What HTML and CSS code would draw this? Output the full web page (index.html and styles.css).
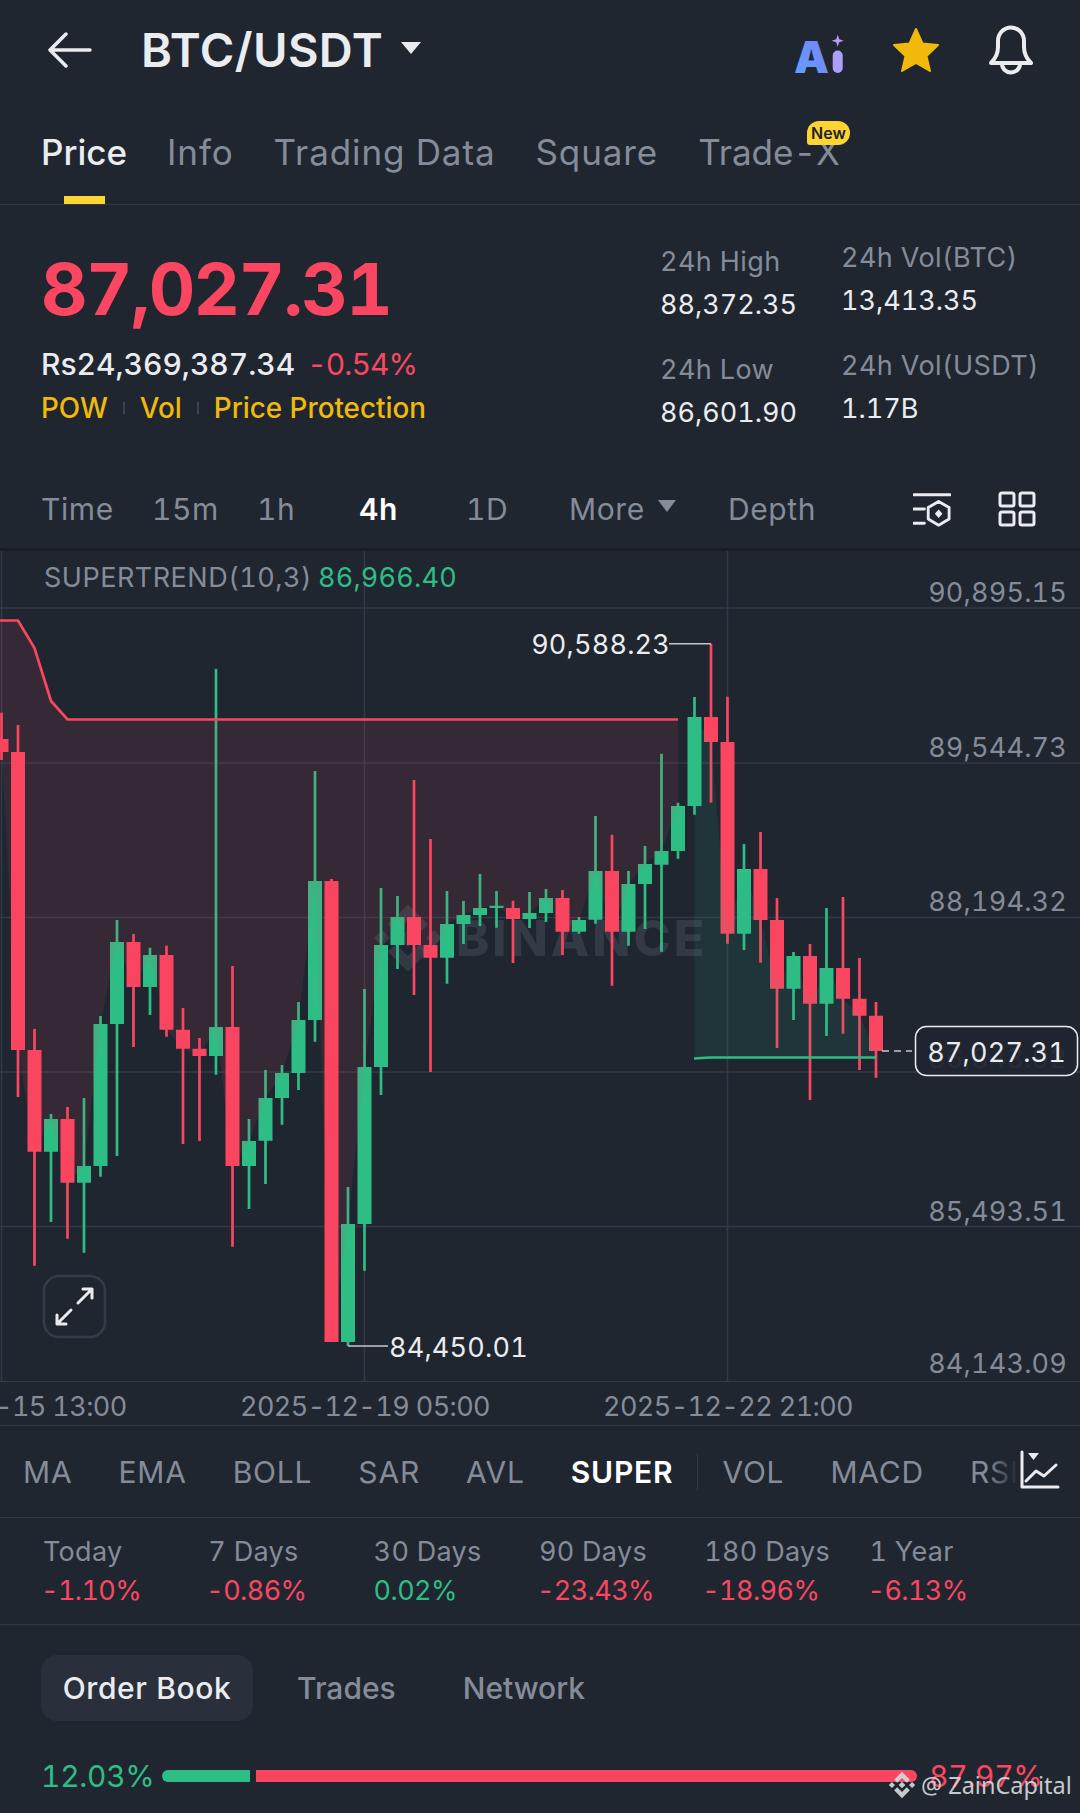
FILE: index.html
```
<!DOCTYPE html>
<html lang="en">
<head>
<meta charset="utf-8">
<title>BTC/USDT</title>
<link rel="stylesheet" href="styles.css">
</head>
<body>
<svg class="defs" width="0" height="0" aria-hidden="true">
  <defs>
    <symbol id="bnb" viewBox="0 0 100 100">
      <path d="M50 38 62 50 50 62 38 50ZM14 39 25 50 14 61 3 50ZM86 39 97 50 86 61 75 50ZM50 3 78 31 67 42 50 25 33 42 22 31ZM50 97 78 69 67 58 50 75 33 58 22 69Z"/>
    </symbol>
    <linearGradient id="aigrad" x1="0" y1="1" x2="1" y2="0">
      <stop offset="0" stop-color="#5fa2ff"/>
      <stop offset="1" stop-color="#7a80f5"/>
    </linearGradient>
  </defs>
</svg>
<main class="page">
  <header class="topbar">
    <svg class="back" viewBox="0 0 44 36"><path d="M42 18H3M18 2 2 18 18 34"/></svg>
    <h1 class="pair">BTC/USDT</h1>
    <svg class="caret" viewBox="0 0 24 16"><path d="M2 2H22L12 14Z"/></svg>
    <div class="actions">
      <svg class="ai" viewBox="0 0 50 34">
        <text x="-3" y="33" class="ai-text">A</text>
        <rect class="ai-i" x="35.700" y="10.600" width="10" height="22.400" rx="5"/>
        <path class="ai-spark" d="M40.700-5.300 42.200-.8 46.700.7 42.200 2.200 40.700 6.700 39.200 2.200 34.700.7 39.200-.8Z"/>
      </svg>
      <svg class="star" viewBox="0 0 48 46"><path d="M24 2 30.500 16.500 46 18 34.500 29 38 44 24 36 10 44 13.500 29 2 18 17.500 16.500Z"/></svg>
      <svg class="bell" viewBox="0 0 48 50"><path d="M4 38Q11 31 11 22V16A13 13.500 0 0 1 37 16V22Q37 31 44 38Z"/><path d="M15 39A9 8.500 0 0 0 33 39"/></svg>
    </div>
  </header>

  <nav class="tabs">
    <a class="tab tab-on">Price</a>
    <a class="tab">Info</a>
    <a class="tab">Trading Data</a>
    <a class="tab">Square</a>
    <a class="tab tab-new">Trade-X<span class="badge">New</span></a>
  </nav>

  <section class="stats">
    <div class="quote">
      <div class="last">87,027.31</div>
      <div class="fiat"><span>Rs24,369,387.34</span><span class="dn">-0.54%</span></div>
      <div class="tags"><span>POW</span><i></i><span>Vol</span><i></i><span>Price Protection</span></div>
    </div>
    <div class="col col-a">
      <dl><dt>24h High</dt><dd>88,372.35</dd></dl>
      <dl><dt>24h Low</dt><dd>86,601.90</dd></dl>
    </div>
    <div class="col col-b">
      <dl><dt>24h Vol(BTC)</dt><dd>13,413.35</dd></dl>
      <dl><dt>24h Vol(USDT)</dt><dd>1.17B</dd></dl>
    </div>
  </section>

  <div class="frames">
    <span>Time</span><span>15m</span><span>1h</span><span class="frame-on">4h</span><span>1D</span>
    <span class="more">More<svg viewBox="0 0 20 14"><path d="M1 1H19L10 13Z"/></svg></span>
    <span>Depth</span>
    <svg class="ficon" viewBox="0 0 40 36"><path d="M1 3H39M1 18H12M1 33H12"/><path d="M27 11 38 17.500V29.500L27 36 16 29.500V17.500Z" transform="translate(0 -1)"/><path class="solid" d="M27 18.500 31 23 27 27.500 23 23Z"/></svg>
    <svg class="ficon" viewBox="0 0 38 36"><rect x="2" y="2" width="14" height="13" rx="2"/><rect x="22" y="2" width="14" height="13" rx="2"/><rect x="2" y="21" width="14" height="13" rx="2"/><rect x="22" y="21" width="14" height="13" rx="2"/></svg>
  </div>

  <section class="chart">
    <svg class="plot" viewBox="0 551 1080 830">
      <path class="grid" d="M0 608H1080M0 763H1080M0 917.500H1080M0 1072H1080M0 1226.500H1080M1.500 551V1381M364.500 551V1381M727.500 551V1381"/>
      <g class="mark">
        <use href="#bnb" x="372" y="902" width="72" height="72"/>
        <text x="456" y="956" class="mark-text">BINANCE</text>
      </g>
      <path class="wick up" d="M51 1114V1222M84 1098V1252.700M100.500 1016V1176.700M117 920V1156M150 947.700V1015M216 669V1074.700M249 1119V1209M265.500 1070V1184M282 1065V1124.700M298.500 1002V1090M315 771V1041.700M348 1187V1346M364.500 989V1270.700M381 888V1095M397.500 896V969M447 891V983.700M463.500 901V944M480 874V926M496.500 891V927.700M529.500 892V928M546 889V922M579 917V933.700M595.500 816V923.700M628.500 871V945.700M645 846V929M661.500 753.700V951.700M678 802.700V858.700M694.500 697V814.700M744 844V950M793.500 952V1020M826.500 908V1036"/>
      <path class="wick dn" d="M1.500 712.700V760M18 725V1097M34.500 1029V1265.700M67.500 1107V1238.700M133.500 934V1047M166.500 945.700V1036.700M183 1008V1144M199.500 1038V1141M232.500 966V1246.700M331.500 879V1342M414 780V995M430.500 839V1072M513 900.700V963M562.500 890V955M612 834.700V985.700M711 643.700V802.700M727.500 696.700V943.700M760.500 832V962.700M777 898V1048M810 944V1100M843 897V1033.700M859.500 958V1070M876 1002V1077.700"/>
      <path class="body up" d="M51 1119V1151.700M84 1166V1182.700M100.500 1024V1166M117 942V1024M150 955V987M216 1027V1056M249 1141V1166M265.500 1098V1140.700M282 1073V1098M298.500 1020V1073M315 881V1020M348 1224V1342M364.500 1067V1224M381 945V1067M397.500 917V945M447 924V957.700M463.500 915V924M480 908V915M496.500 905.700V908M529.500 913V919M546 898V913M579 920V931.700M595.500 871V919.700M628.500 884V931.700M645 864V884M661.500 851V864.700M678 806V851M694.500 717V806M744 869V933.700M793.500 956V988.700M826.500 968V1003.700"/>
      <path class="body dn" d="M1.500 739V752M18 752V1050M34.500 1050V1151.700M67.500 1119V1182.700M133.500 942V987M166.500 955V1029.700M183 1029.700V1048.700M199.500 1048.700V1056M232.500 1027V1166M331.500 881V1342M414 917V945M430.500 945V957.700M513 908V919M562.500 898V931.700M612 871V931.700M711 717V742M727.500 742V933.700M760.500 869V920M777 920V988.700M810 956V1003.700M843 968V998.700M859.500 998.700V1015.700M876 1015.700V1051"/>
      <polygon class="fill-dn" points="0,620.500 18,620.500 34.500,648 51,701 67.500,719.500 678,719.700 678,806 661.500,851 645,864 628.500,884 612,931.700 595.500,871 579,920 562.500,931.700 546,898 529.500,913 513,919 496.500,905.700 480,908 463.500,915 447,924 430.500,957.700 414,945 397.500,917 381,945 364.500,1067 348,1224 331.500,1342 315,881 298.500,1020 282,1073 265.500,1098 249,1141 232.500,1166 216,1027 199.500,1056 183,1048.700 166.500,1029.700 150,955 133.500,987 117,942 100.500,1024 84,1166 67.500,1182.700 51,1119 34.500,1151.700 18,1050 1.500,752 0,752"/>
      <polygon class="fill-up" points="694.500,717 711,742 727.500,933.700 744,869 760.500,920 777,988.700 793.500,956 810,1003.700 826.500,968 843,998.700 859.500,1015.700 876,1051 876,1058 694.500,1058"/>
      <path class="trend dn" d="M0 620.500H18L34.500 648 51 701 67.500 719.500H678"/>
      <path class="trend up" d="M694 1058.500 710 1057.500H876"/>
      <path class="leader" d="M669 643.700H711M348 1346H388"/>
      <path class="dash" d="M882 1051H912"/>

      <text x="44" y="587" class="legend">SUPERTREND(10,3)</text>
      <text x="318" y="587" class="legend-up">86,966.40</text>
      <text x="1067" y="602" class="axis">90,895.15</text>
      <text x="1067" y="757" class="axis">89,544.73</text>
      <text x="1067" y="911" class="axis">88,194.32</text>
      <text x="1067" y="1068" class="axis">86,843.92</text>
      <text x="1067" y="1221" class="axis">85,493.51</text>
      <text x="1067" y="1373" class="axis">84,143.09</text>
      <text x="670" y="654" class="extreme end">90,588.23</text>
      <text x="389" y="1357" class="extreme">84,450.01</text>
      <rect class="tag" x="915.500" y="1026.500" width="162" height="49" rx="11"/>
      <text x="1066" y="1062" class="tag-text">87,027.31</text>
      <rect class="expand" x="44" y="1276" width="61" height="61" rx="15"/>
      <path class="expand-arrow" d="M78 1303 92 1289M83 1289H92V1298M71 1310 57 1324M57 1315V1324H66"/>
    </svg>
  </section>

  <div class="dates">
    <span class="d1">-15 13:00</span>
    <span class="d2">2025-12-19 05:00</span>
    <span class="d3">2025-12-22 21:00</span>
  </div>

  <div class="indicators">
    <span>MA</span><span>EMA</span><span>BOLL</span><span>SAR</span><span>AVL</span>
    <span class="ind-on">SUPER</span>
    <span>VOL</span><span>MACD</span><span>RSI</span>
    <div class="ind-end">
      <svg viewBox="0 0 40 40"><path d="M2 2V37H38"/><path d="M6 31 16 21 24 26 36 15"/><path class="solid" d="M8 3H19L13.500 10Z"/></svg>
    </div>
  </div>

  <div class="returns">
    <div><p>Today</p><b class="dn">-1.10%</b></div>
    <div><p>7 Days</p><b class="dn">-0.86%</b></div>
    <div><p>30 Days</p><b class="up">0.02%</b></div>
    <div><p>90 Days</p><b class="dn">-23.43%</b></div>
    <div><p>180 Days</p><b class="dn">-18.96%</b></div>
    <div><p>1 Year</p><b class="dn">-6.13%</b></div>
  </div>

  <div class="book">
    <span class="book-on">Order Book</span>
    <span class="book-trades">Trades</span>
    <span class="book-net">Network</span>
  </div>

  <div class="ratio">
    <span class="up ratio-label">12.03%</span>
    <div class="bar"><i class="bar-up"></i><i class="bar-dn"></i></div>
    <span class="dn">87.97%</span>
  </div>

  <div class="stamp"><svg viewBox="0 0 100 100"><use href="#bnb"/></svg><span>@ ZainCapital</span></div>
</main>
</body>
</html>
```

FILE: styles.css
```
:root {
  --bg: #1f2630;
  --line: #333a46;
  --text: #eaecef;
  --muted: #858c99;
  --red: #fa4660;
  --green: #2ebd85;
  --yellow: #f0b90b;
}
* { box-sizing: border-box; }
html, body { margin: 0; background: var(--bg); }
body { font-family: Inter, "Liberation Sans", sans-serif; font-variant-numeric: tabular-nums; color: var(--text); }
.defs { position: absolute; }
.page { position: relative; width: 1080px; height: 1813px; overflow: hidden; background: var(--bg); }
svg { display: block; }

.topbar { height: 100px; display: flex; align-items: center; padding: 0 45px 0 48px; }
.back { width: 44px; height: 36px; fill: none; stroke: var(--text); stroke-width: 3.5; stroke-linecap: round; stroke-linejoin: round; }
.pair { margin: 0 0 0 49px; font-size: 47px; font-weight: 600; letter-spacing: .4px; line-height: 100px; }
.caret { width: 24px; height: 16px; margin: 0 0 4px 16px; fill: var(--text); }
.actions { margin-left: auto; display: flex; align-items: center; gap: 47px; }
.ai { width: 50px; height: 34px; margin: 14px -2px 0 0; overflow: visible; }
.ai-text { font-size: 44px; font-weight: 900; fill: url(#aigrad); }
.ai-i { fill: #ac9ffb; }
.ai-spark { fill: #b59bfb; }
.star { width: 48px; height: 46px; fill: var(--yellow); stroke: var(--yellow); stroke-width: 2; stroke-linejoin: round; }
.bell { width: 48px; height: 50px; fill: none; stroke: var(--text); stroke-width: 4; stroke-linejoin: round; stroke-linecap: round; }

.tabs { height: 105px; display: flex; gap: 40px; padding: 0 41px; border-bottom: 1px solid var(--line); }
.tab { position: relative; height: 104px; font-size: 35px; letter-spacing: .9px; line-height: 104px; color: var(--muted); }
.tab-on { color: var(--text); font-weight: 500; letter-spacing: 0; }
.tab-new { letter-spacing: 0; }
.tab-on::after { content: ""; position: absolute; left: 23px; bottom: 0; width: 41px; height: 8px; background: #fcd535; }
.badge { position: absolute; right: -10px; top: 21px; width: 43px; height: 24px; background: #fcd535; color: #1e2329; border-radius: 12px 12px 12px 3px; font-size: 16px; font-weight: 600; letter-spacing: 0; line-height: 24px; text-align: center; }

.stats { height: 265px; display: flex; padding-left: 41px; }
.quote { width: 619px; padding-top: 47px; }
.last { font-size: 72px; font-weight: 700; letter-spacing: -1.600px; line-height: 74px; color: var(--red); }
.fiat { display: flex; gap: 12px; margin-top: 20px; font-size: 30px; line-height: 36px; font-weight: 500; color: var(--text); }
.fiat .dn { font-weight: 400; letter-spacing: -.9px; }
.tags { display: flex; align-items: center; margin-top: 9px; font-size: 27.800px; line-height: 34px; font-weight: 500; color: var(--yellow); }
.tags i { width: 2px; height: 12px; margin: 0 15px; background: #3a4350; }
.col { font-size: 27px; }
.col-a { width: 181px; padding-top: 39px; }
.col-b { padding-top: 35px; }
.col dl { margin: 0 0 29px; }
.col dt { line-height: 36px; letter-spacing: .4px; color: var(--muted); }
.col dd { margin: 7px 0 0; line-height: 36px; color: var(--text); }

.frames { height: 81px; display: grid; grid-template-columns: 111px 105px 102px 107px 103px 159px 185px 85px 38px; align-items: center; padding-left: 41px; border-bottom: 3px solid #181d25; font-size: 30px; letter-spacing: .6px; color: var(--muted); }
.frame-on { color: #fff; font-weight: 600; }
.more { display: flex; align-items: center; gap: 12px; }
.more svg { width: 20px; height: 14px; margin-bottom: 6px; fill: var(--muted); }
.ficon { width: 38px; height: 36px; fill: none; stroke: var(--text); stroke-width: 3; stroke-linecap: round; stroke-linejoin: round; }
.solid { fill: currentColor; stroke: none; }
.ficon .solid { fill: var(--text); }

.chart { height: 831px; border-bottom: 1px solid var(--line); }
.plot { width: 1080px; height: 830px; }
.plot text { font-family: Inter, "Liberation Sans", sans-serif; font-variant-numeric: tabular-nums; letter-spacing: .2px; }
.grid { fill: none; stroke: var(--line); stroke-width: 1.5; }
.mark { fill: #333a46; }
.plot .mark-text { font-size: 50px; font-weight: 800; letter-spacing: 3px; }
.wick { fill: none; stroke-width: 2.700; }
.body { fill: none; stroke-width: 14; }
.wick.up, .body.up { stroke: var(--green); }
.wick.dn, .body.dn { stroke: var(--red); }
.fill-dn { fill: rgba(246, 70, 93, .1); }
.fill-up { fill: rgba(46, 189, 133, .1); }
.trend { fill: none; stroke-width: 2.700; }
.trend.dn { stroke: var(--red); }
.trend.up { stroke: var(--green); }
.leader { fill: none; stroke: #c2c6cd; stroke-width: 1.500; }
.dash { fill: none; stroke: #c2c6cd; stroke-width: 1.500; stroke-dasharray: 7 5; }
.plot .legend { font-size: 27px; letter-spacing: .5px; fill: var(--muted); }
.legend-up { font-size: 27px; fill: var(--green); }
.axis { font-size: 27px; fill: var(--muted); text-anchor: end; }
.extreme { font-size: 27px; fill: var(--text); }
.extreme.end { text-anchor: end; }
.tag { fill: rgba(31, 38, 48, .93); stroke: var(--text); stroke-width: 1.500; }
.tag-text { font-size: 27px; fill: var(--text); text-anchor: end; }
.expand { fill: none; stroke: #353b47; stroke-width: 2.500; }
.expand-arrow { fill: none; stroke: var(--text); stroke-width: 3; stroke-linecap: round; stroke-linejoin: round; }

.dates { position: relative; height: 44px; border-bottom: 1px solid var(--line); font-size: 27px; letter-spacing: -.6px; line-height: 50px; color: var(--muted); }
.dates span { position: absolute; top: 0; }
.d1 { left: -5px; }
.d2 { left: 240px; }
.d3 { left: 603px; }

.indicators { position: relative; height: 92px; display: flex; align-items: center; gap: 46px; padding-left: 23px; border-bottom: 1px solid var(--line); font-size: 30px; letter-spacing: .8px; color: var(--muted); overflow: hidden; }
.ind-on { position: relative; margin-right: 3px; color: #fff; font-weight: 600; }
.ind-on::after { content: ""; position: absolute; right: -25px; top: 0; bottom: 0; width: 1px; background: var(--line); }
.ind-end { position: absolute; right: 0; top: 0; bottom: 0; width: 90px; display: flex; align-items: center; padding-left: 30px; background: linear-gradient(90deg, rgba(31, 38, 48, .1), var(--bg) 32%); }
.ind-end svg { width: 40px; height: 40px; margin-bottom: 4px; fill: none; color: var(--text); stroke: var(--text); stroke-width: 3; stroke-linecap: round; stroke-linejoin: round; }

.returns { height: 107px; display: grid; grid-template-columns: repeat(6, 165.300px); align-items: start; padding: 16px 0 0 43px; border-bottom: 1px solid var(--line); font-size: 27px; }
.returns p { margin: 0; line-height: 36px; letter-spacing: .3px; color: var(--muted); }
.returns b { display: block; margin-top: 3px; line-height: 36px; letter-spacing: -.6px; font-weight: 400; }
.returns b.dn { margin-left: -2px; }
.up { color: var(--green); }
.dn { color: var(--red); }

.book { height: 126px; display: flex; align-items: center; gap: 44px; padding-left: 41px; font-size: 30px; font-weight: 500; color: var(--muted); }
.book-on { height: 66px; width: 212px; line-height: 66px; letter-spacing: .6px; text-align: center; border-radius: 16px; background: #2a303b; color: var(--text); }
.book-trades { margin-right: 23px; }

.ratio { display: flex; align-items: center; padding-left: 41px; height: 50px; font-size: 30px; letter-spacing: -.3px; }
.ratio-label { width: 121px; }
.bar { display: flex; gap: 6px; width: 755px; margin-right: 12px; }
.bar i { display: block; height: 12px; }
.bar-up { width: 88px; background: var(--green); border-radius: 6px 0 0 6px; }
.bar-dn { flex: 1; background: var(--red); border-radius: 0 6px 6px 0; }

.stamp { position: absolute; left: 888px; top: 1769px; display: flex; align-items: center; gap: 5px; white-space: nowrap; font-family: "Noto Sans", sans-serif; font-size: 23.500px; color: #d5d8dc; opacity: .92; }
.stamp svg { width: 28px; height: 32px; flex: none; fill: #d5d8dc; }
```
